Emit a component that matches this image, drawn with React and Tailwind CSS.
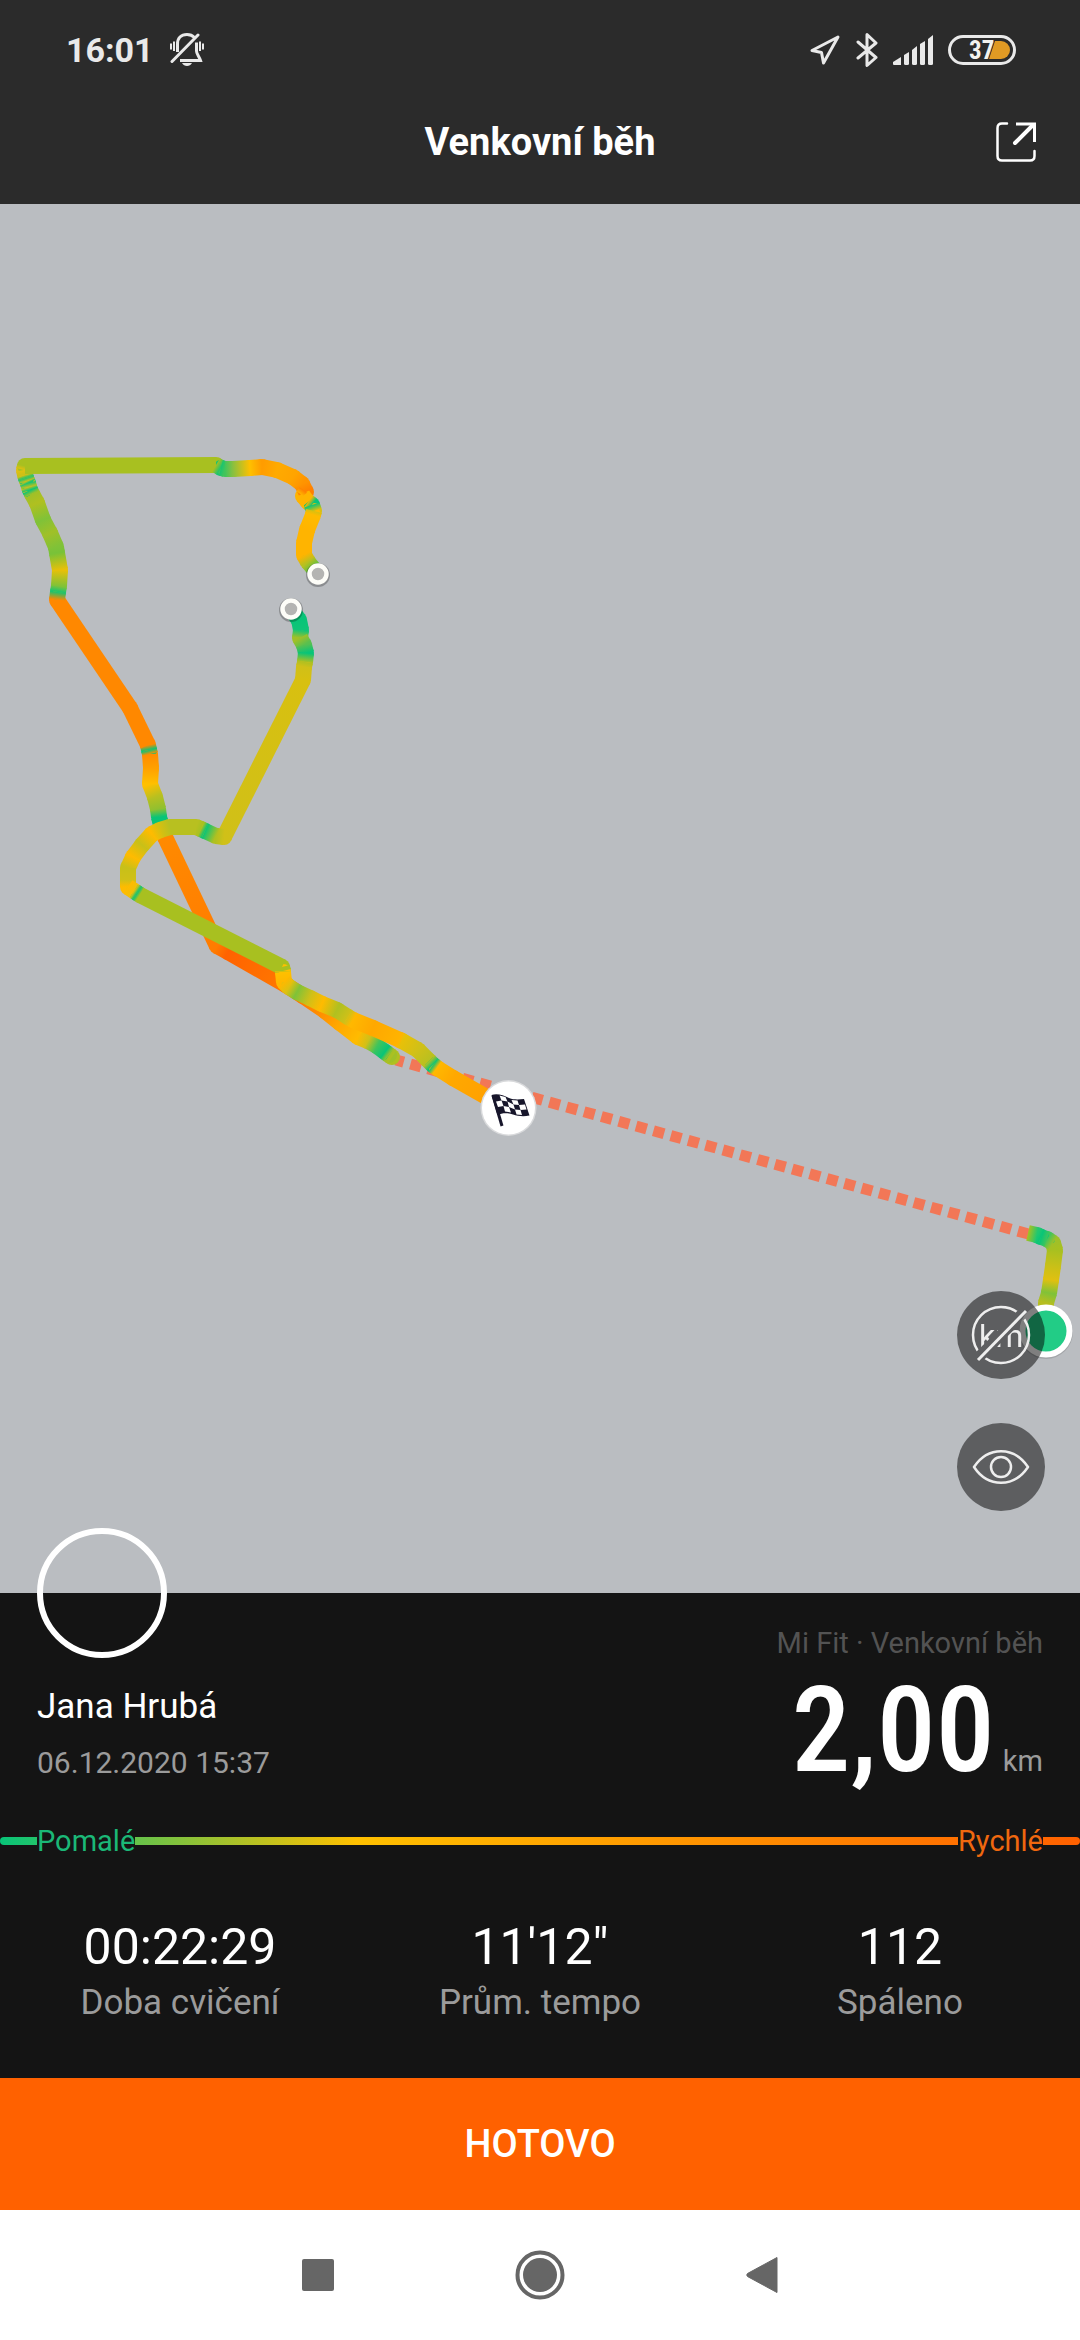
import React from "react";

// Track points: x, y and the pace colour at that point
const approach = [
  [1046, 1326, "#b6be20"],
  [1046, 1303, "#b6be20"],
  [1049, 1293, "#80c238"],
  [1051, 1280, "#e0c010"],
  [1053, 1266, "#c8c018"],
  [1055, 1250, "#a8c020"],
  [1053, 1243, "#a0c028"],
  [1047, 1239, "#40c45c"],
  [1041, 1237, "#08c478"],
  [1037, 1235, "#20c870"],
  [1028, 1233, "#a8c020"],
];

const outbound = [
  [392, 1057, "#b0c020"],
  [389, 1055, "#a0c028"],
  [385, 1052, "#08c478"],
  [377, 1046, "#40c45c"],
  [368, 1041, "#d0c018"],
  [358, 1037, "#ffbb00"],
  [340, 1023, "#ffa800"],
  [325, 1011, "#ff9000"],
  [303, 996, "#ff7a00"],
  [286, 985, "#ff7800"],
  [228, 952, "#ff6200"],
  [217, 946, "#ff7c00"],
  [165, 837, "#ff8a00"],
  [160, 821, "#08c478"],
  [159, 817, "#08c478"],
  [158, 809, "#90c030"],
  [155, 797, "#b8c020"],
  [150, 784, "#ffc000"],
  [151, 768, "#ffa000"],
  [150, 754, "#ff8c00"],
  [149, 750, "#08c478"],
  [148, 745, "#ff8800"],
  [130, 708, "#ff8800"],
  [57, 600, "#ff8800"],
  [58, 592, "#18c470"],
  [59, 586, "#80c238"],
  [60, 570, "#e8c008"],
  [57, 553, "#78c238"],
  [56, 547, "#80c238"],
  [50, 533, "#a0c028"],
  [43, 520, "#80c238"],
  [37, 503, "#b0c020"],
  [32, 494, "#a0c028"],
  [30, 490, "#08c478"],
  [29, 487, "#c0c020"],
  [28, 483, "#18c470"],
  [27, 481, "#c0c020"],
  [26, 478, "#18c470"],
  [25, 475, "#c8c018"],
  [24, 470, "#e0c010"],
  [25, 466, "#a8c020"],
  [216, 465, "#a8c020"],
  [221, 468, "#18c470"],
  [225, 469, "#40c45c"],
  [233, 469, "#88c040"],
  [250, 468, "#ffc000"],
  [262, 467, "#ff9c00"],
  [277, 470, "#ffaa00"],
  [293, 477, "#ffa400"],
  [302, 484, "#ff9400"],
  [306, 492, "#ff8000"],
  [303, 496, "#ffb400"],
  [308, 502, "#ffb400"],
  [312, 505, "#08c478"],
  [314, 511, "#d8c010"],
  [313, 515, "#ffbb00"],
  [307, 530, "#ffb400"],
  [304, 543, "#ffb400"],
  [304, 555, "#ffb400"],
  [308, 562, "#b8c020"],
  [313, 568, "#60c040"],
];

const inbound = [
  [291, 609, "#08c478"],
  [299, 620, "#08c478"],
  [301, 630, "#10c478"],
  [300, 638, "#a0c028"],
  [304, 645, "#58c050"],
  [306, 653, "#08c478"],
  [305, 662, "#b0c020"],
  [304, 667, "#d0c018"],
  [303, 680, "#d8c010"],
  [224, 837, "#d0c018"],
  [216, 836, "#b0c020"],
  [205, 831, "#08c478"],
  [201, 829, "#a8c020"],
  [196, 827, "#b8c020"],
  [170, 827, "#b8c020"],
  [160, 830, "#d8c010"],
  [152, 834, "#ffbb00"],
  [142, 845, "#c8c018"],
  [133, 857, "#ffbb00"],
  [128, 868, "#c8c018"],
  [128, 880, "#d0c018"],
  [128, 887, "#ffbb00"],
  [134, 891, "#f0c008"],
  [137, 893, "#08c478"],
  [140, 895, "#a8c020"],
  [282, 967, "#a8c020"],
  [283, 971, "#a8c020"],
  [283, 972, "#ffc000"],
  [284, 982, "#ffb800"],
  [289, 987, "#e0c010"],
  [297, 992, "#80c238"],
  [310, 998, "#d0c018"],
  [322, 1004, "#ffbb00"],
  [337, 1010, "#b0c020"],
  [348, 1017, "#d0c018"],
  [353, 1020, "#ffb800"],
  [373, 1028, "#ffa800"],
  [400, 1040, "#ffb400"],
  [402, 1041, "#e8c008"],
  [418, 1050, "#d0c018"],
  [429, 1061, "#b8c020"],
  [433, 1065, "#08c478"],
  [437, 1068, "#ffb800"],
  [453, 1078, "#ffa800"],
  [490, 1099, "#ffa000"],
];

const stats = [
  { value: "00:22:29", label: "Doba cvičení" },
  { value: "11'12\"", label: "Prům. tempo" },
  { value: "112", label: "Spáleno" },
];

const Track = ({ id, points }) => (
  <g strokeWidth="16">
    {/* Round joints go under the segments */}
    {points.slice(0, -1).map(([x, y, color], i) => (
      <circle key={i} cx={x} cy={y} r="8" fill={color} />
    ))}
    {points.slice(1).map(([x, y, color], i) => {
      const [px, py, prevColor] = points[i];
      const gradientId = `${id}-${i}`;
      return (
        <g key={gradientId}>
          <linearGradient
            id={gradientId}
            gradientUnits="userSpaceOnUse"
            x1={px}
            y1={py}
            x2={x}
            y2={y}
          >
            <stop offset="0" stopColor={prevColor} />
            <stop offset="1" stopColor={color} />
          </linearGradient>
          <path
            d={`M${px} ${py}L${x} ${y}`}
            stroke={`url(#${gradientId})`}
          />
        </g>
      );
    })}
  </g>
);

const GapMarker = ({ x, y }) => (
  <g>
    <circle cx={x} cy={y + 1} r="12" fill="#000" opacity="0.25" />
    <circle
      cx={x}
      cy={y}
      r="8.5"
      fill="#b4b4b2"
      stroke="#fdfdf8"
      strokeWidth="4.5"
    />
  </g>
);

const FinishFlag = () => (
  <g>
    <circle cx="508.5" cy="1108" r="28" fill="#d9dadc" />
    <circle cx="508.5" cy="1108" r="26.5" fill="#fff" />
    <path d="M493 1095.5L502 1126" stroke="#17162b" strokeWidth="3" />
    <path
      d="M491.5 1095C497 1093 503 1095 509 1098C514 1100 519 1099.5 524 1099L529.5 1115.5C523 1117 518 1116 513 1114.5C507 1112.5 502 1113 497.5 1115Z"
      fill="#17162b"
    />
    <g fill="#fff">
      <path d="M499.5 1095.5L505.5 1097L507.5 1101.5L501.5 1100.5Z" />
      <path d="M511.5 1100L517.5 1100.5L519 1105L513.5 1104.5Z" />
      <path d="M496 1101.5L501.5 1100.5L503.5 1106L498 1107Z" />
      <path d="M507.5 1101.5L513.5 1104.5L515 1109.5L509 1107Z" />
      <path d="M519 1105L525 1104.5L526.5 1109.5L520.5 1110Z" />
      <path d="M503.5 1106L509 1107L511 1112.5L505 1111.5Z" />
      <path d="M515 1109.5L520.5 1110L522 1115L516.5 1114.5Z" />
    </g>
  </g>
);

const RouteMap = () => (
  <svg
    viewBox="0 204 1080 1389"
    fill="none"
    role="img"
    aria-label="Trasa"
    className="block w-full h-auto bg-[#babdc1]"
  >
    <path
      d="M1028.5 1234L396 1060"
      stroke="#f27757"
      strokeWidth="11"
      strokeDasharray="11 7"
    />
    <Track id="approach" points={approach} />
    <Track id="outbound" points={outbound} />
    <Track id="inbound" points={inbound} />
    <GapMarker x={318} y={574} />
    <GapMarker x={291} y={609} />
    <FinishFlag />
    <circle cx="1046" cy="1332" r="27" fill="#000" opacity="0.12" />
    <circle
      cx="1046"
      cy="1331"
      r="23.5"
      fill="#22cc86"
      stroke="#fff"
      strokeWidth="6"
    />
  </svg>
);

const MutedBellIcon = () => (
  <svg width="34" height="34" viewBox="0 0 34 34" fill="none" stroke="#e9e9e9">
    <path
      d="M7.5 19V11C7.5 5 11 1.5 17 1.5C20 1.5 22.5 2.5 24.5 4.5"
      strokeWidth="3"
    />
    <path d="M26.5 9.5V18C26.5 21 29 23 30.5 27.5H10" strokeWidth="3" />
    <path d="M2 28.5L28 2" strokeWidth="3" strokeLinecap="round" />
    <path
      d="M1 10.5V16.5M4 8.5V18M30 8.5V18M33 10.5V16.5"
      strokeWidth="2"
    />
    <path
      d="M12 30H22C21 32 19 33 17 33C15 33 13 32 12 30Z"
      fill="#e9e9e9"
      stroke="none"
    />
  </svg>
);

const LocationIcon = () => (
  <svg width="32" height="32" viewBox="0 0 32 32" fill="none">
    <path
      d="M29 3L3 16.5L12.5 18.5L14.5 29Z"
      stroke="#e9e9e9"
      strokeWidth="3"
      strokeLinejoin="round"
    />
  </svg>
);

const BluetoothIcon = () => (
  <svg width="22" height="36" viewBox="0 0 22 36" fill="none">
    <path
      d="M2 10L20 25.5L11 33.5V2.5L20 11L2 26"
      stroke="#e9e9e9"
      strokeWidth="3"
      strokeLinecap="round"
      strokeLinejoin="round"
    />
  </svg>
);

const SignalIcon = () => (
  <svg width="40" height="30" viewBox="0 0 40 30" fill="#e9e9e9">
    <path d="M0 27L8 22V30H1Q0 30 0 29Z" />
    <path d="M11 20L16 17V28.5Q16 30 14.5 30H12.5Q11 30 11 28.5Z" />
    <path d="M19 15L24 11V28.5Q24 30 22.5 30H20.5Q19 30 19 28.5Z" />
    <path d="M27 9L32 6V28.5Q32 30 30.5 30H28.5Q27 30 27 28.5Z" />
    <path d="M35 4L40 0V28.5Q40 30 38.5 30H36.5Q35 30 35 28.5Z" />
  </svg>
);

const BatteryIcon = () => (
  <svg width="68" height="30" viewBox="0 0 68 30" fill="none">
    <rect
      x="1.5"
      y="1.5"
      width="65"
      height="27"
      rx="13.5"
      stroke="#e9e9e9"
      strokeWidth="3"
    />
    <path d="M47 6H53A9 9 0 0 1 53 24H41Z" fill="#e09a24" />
    <text
      x="21"
      y="24"
      fill="#f2f2ee"
      className="font-['Roboto_Condensed','Roboto',sans-serif] text-[25px] font-bold"
    >
      37
    </text>
  </svg>
);

const ShareIcon = () => (
  <svg width="40" height="40" viewBox="0 0 40 40" fill="none" stroke="#fff">
    <path
      d="M11 1.5H6Q1.5 1.5 1.5 6V34Q1.5 38.5 6 38.5H34Q38.5 38.5 38.5 34V29"
      strokeWidth="2.5"
      strokeLinecap="round"
    />
    <path d="M20 2H38.5V20" strokeWidth="3" />
    <path d="M37 3L19 21" strokeWidth="4" strokeLinecap="round" />
  </svg>
);

const HideKmIcon = () => (
  <svg width="88" height="88" viewBox="0 0 88 88" fill="none" stroke="#eee">
    <mask
      id="km-gap"
      maskUnits="userSpaceOnUse"
      x="0"
      y="0"
      width="88"
      height="88"
    >
      <rect width="88" height="88" fill="#fff" stroke="none" />
      <path d="M12 76L76 12" stroke="#000" strokeWidth="11" />
    </mask>
    <g mask="url(#km-gap)">
      <circle cx="44" cy="44" r="28" strokeWidth="2.5" />
      <text
        x="22"
        y="56"
        fill="#eee"
        stroke="none"
        className="font-['Roboto',sans-serif] text-[32px]"
      >
        km
      </text>
    </g>
    <path d="M21 69L69 20" strokeWidth="3" />
  </svg>
);

const EyeIcon = () => (
  <svg width="88" height="88" viewBox="0 0 88 88" fill="none" stroke="#eee">
    <path
      d="M17 44C31 23 57 23 71 44C57 65 31 65 17 44Z"
      strokeWidth="2.5"
      strokeLinejoin="round"
    />
    <circle cx="44" cy="44" r="10" strokeWidth="2.5" />
  </svg>
);

const StatusBar = () => (
  <div className="flex h-11 items-center justify-between pl-[66px] pr-16">
    <div className="flex items-center gap-4">
      <span className="text-[34px] leading-11 font-bold text-[#e9e9e9]">
        16:01
      </span>
      <MutedBellIcon />
    </div>
    <div className="flex items-center gap-[15px]">
      <LocationIcon />
      <BluetoothIcon />
      <SignalIcon />
      <BatteryIcon />
    </div>
  </div>
);

const Header = () => (
  <header className="bg-[#2b2b2b] pt-7">
    <StatusBar />
    <div className="mt-2 grid h-31 grid-cols-[1fr_auto_1fr] items-center px-11">
      <h1 className="col-start-2 text-[38px] font-bold text-white">
        Venkovní běh
      </h1>
      <button type="button" aria-label="Sdílet" className="justify-self-end">
        <ShareIcon />
      </button>
    </div>
  </header>
);

const MapButton = ({ label, children }) => (
  <button
    type="button"
    aria-label={label}
    className="size-22 overflow-hidden rounded-full bg-black/50"
  >
    {children}
  </button>
);

const Summary = () => (
  <section className="relative bg-[#141414] pb-[51px]">
    <div className="absolute left-[37px] -top-[65px] size-[130px] rounded-full border-6 border-white" />
    <div className="flex justify-between px-[37px]">
      <div className="pt-[90px]">
        <p className="text-[35px] leading-12 text-white">Jana Hrubá</p>
        <p className="mt-3 text-[30px] leading-10 text-[#9b9b9b]">
          06.12.2020 15:37
        </p>
      </div>
      <div className="pt-[30px] text-right">
        <p className="text-[29px] leading-10 text-[#535353]">
          Mi Fit · Venkovní běh
        </p>
        <p className="mt-5 flex items-baseline justify-end gap-2">
          <span className="font-['Roboto_Condensed','Roboto',sans-serif] text-[118px] leading-24 font-medium text-white">
            2,00
          </span>
          <span className="text-[29px] leading-10 text-[#9b9b9b]">km</span>
        </p>
      </div>
    </div>

    {/* Pace scale */}
    <div className="relative mt-[38px] flex justify-between px-[37px] text-[29px] leading-10">
      <div className="absolute inset-x-0 top-4 h-2 rounded-full bg-linear-to-r/srgb from-[#08c478] via-[#ffc000] via-33% to-[#ff6100]" />
      <span className="relative bg-[#141414] text-[#1bb877]">Pomalé</span>
      <span className="relative bg-[#141414] text-[#f0680f]">Rychlé</span>
    </div>

    <dl className="mt-[54px] grid grid-cols-3 text-center">
      {stats.map(({ value, label }) => (
        <div key={label} className="flex flex-col-reverse">
          <dt className="text-[35px] leading-12 text-[#9b9b9b]">{label}</dt>
          <dd className="text-[50px] leading-16 text-white">{value}</dd>
        </div>
      ))}
    </dl>
  </section>
);

const NavBar = () => (
  <nav className="flex h-[130px] items-center justify-center gap-[181px] bg-white">
    <button type="button" aria-label="Poslední aplikace">
      <svg width="32" height="32" viewBox="0 0 32 32">
        <rect width="32" height="32" rx="2" fill="#666" />
      </svg>
    </button>
    <button type="button" aria-label="Domů">
      <svg width="50" height="50" viewBox="0 0 50 50" fill="none">
        <circle cx="25" cy="25" r="22.5" stroke="#666" strokeWidth="4" />
        <circle cx="25" cy="25" r="17" fill="#666" />
      </svg>
    </button>
    <button type="button" aria-label="Zpět">
      <svg width="32" height="38" viewBox="0 0 32 38">
        <path
          d="M31 1.5V36.5L1.5 20.5Q0 19 1.5 17.5Z"
          fill="#666"
          stroke="#666"
          strokeLinejoin="round"
        />
      </svg>
    </button>
  </nav>
);

const App = () => {
  return (
    <div className="flex min-h-screen flex-col bg-white font-['Roboto',sans-serif]">
      <Header />
      <main>
        <div className="relative">
          <RouteMap />
          <div className="absolute right-[35px] bottom-[82px] flex flex-col gap-11">
            <MapButton label="Skrýt kilometry">
              <HideKmIcon />
            </MapButton>
            <MapButton label="Zobrazení mapy">
              <EyeIcon />
            </MapButton>
          </div>
        </div>
        <Summary />
        <button
          type="button"
          className="block h-33 w-full bg-[#ff6100] text-[38px] font-medium text-white"
        >
          HOTOVO
        </button>
      </main>
      <NavBar />
    </div>
  );
};

export default App;
